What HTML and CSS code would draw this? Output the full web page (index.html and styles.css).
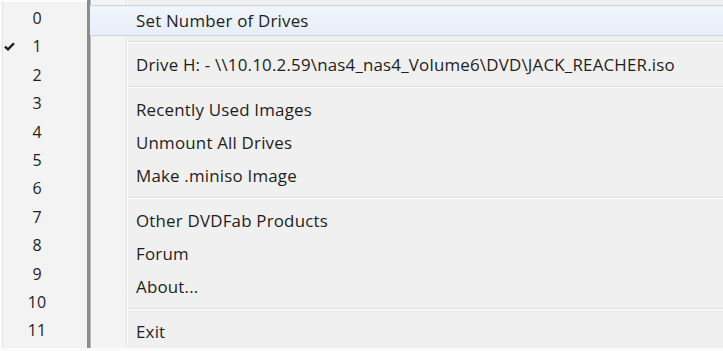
FILE: index.html
```html
<!DOCTYPE html>
<html lang="en">
<head>
    <meta charset="UTF-8">
    <title>Virtual Drive Menu</title>
    <link rel="stylesheet" href="styles.css">
</head>
<body>

<div class="menus">
    <ul class="submenu">
        <li>0</li>
        <li class="checked">
            <svg class="check" width="11" height="9" viewBox="0 0 11 9">
                <path d="M1 4.6 L4 7.4 L10 1.2" fill="none" stroke="#1a1a1a" stroke-width="2.3"/>
            </svg>1
        </li>
        <li>2</li>
        <li>3</li>
        <li>4</li>
        <li>5</li>
        <li>6</li>
        <li>7</li>
        <li>8</li>
        <li>9</li>
        <li>10</li>
        <li>11</li>
    </ul>

    <div class="menu">
        <div class="item hover">Set Number of Drives</div>
        <div class="sep"></div>
        <div class="item">Drive H: - \\10.10.2.59\nas4_nas4_Volume6\DVD\JACK_REACHER.iso</div>
        <div class="sep"></div>
        <div class="item">Recently Used Images</div>
        <div class="item">Unmount All Drives</div>
        <div class="item">Make .miniso Image</div>
        <div class="sep"></div>
        <div class="item">Other DVDFab Products</div>
        <div class="item">Forum</div>
        <div class="item">About...</div>
        <div class="sep"></div>
        <div class="item">Exit</div>
    </div>
</div>

</body>
</html>
```

FILE: styles.css
```css
/* Windows 7 style context menu */
body {
  margin: 0;
  background: #fbfbfb;
  font-family: 'Open Sans', 'Noto Sans', sans-serif;
  color: #1e1e1e;
  overflow: hidden;
}

.menus {
  display: flex;
  height: 348px;
}

/* number submenu on the left */
.submenu {
  list-style: none;
  margin: 0;
  padding: 2px 0 0;
  width: 84px;
  background: #f3f3f3;
  border-left: 1px solid #e4e4e4;
  border-top: 2px solid #fff;
  margin-left: 2px;
}

.submenu li {
  position: relative;
  height: 28.4px;
  line-height: 28.4px;
  text-align: center;
  font-size: 16px;
  padding-right: 16px;
}

.check {
  position: absolute;
  left: 1px;
  top: 10px;
}

/* main menu */
.menu {
  flex: 1;
  border-left: 3px solid #8c8c8c;
  box-shadow: inset 1px 0 0 #b8b8b8;
  background: linear-gradient(to right, #f4f4f4 0, #f4f4f4 36px, #e3e3e3 36px, #e3e3e3 37px, #fdfdfd 37px, #fdfdfd 38px, #f0f0f0 38px);
  padding-top: 3px;
}

.item {
  height: 33px;
  line-height: 33px;
  padding-left: 46px;
  font-size: 16.9px;
  letter-spacing: 0.2px;
  white-space: nowrap;
}

.item.hover {
  height: 29px;
  line-height: 29px;
  margin-top: 2px;
  background: linear-gradient(to bottom, #f1f5fb, #e7eef8);
  border-top: 1px solid #c9d4e2;
  border-bottom: 1px solid #c9d4e2;
}

.sep {
  height: 12px;
  margin-left: 38px;
  background: linear-gradient(to bottom, transparent 5px, #dfdfdf 5px, #dfdfdf 6px, #ffffff 6px, #ffffff 7px, transparent 7px);
}
```
